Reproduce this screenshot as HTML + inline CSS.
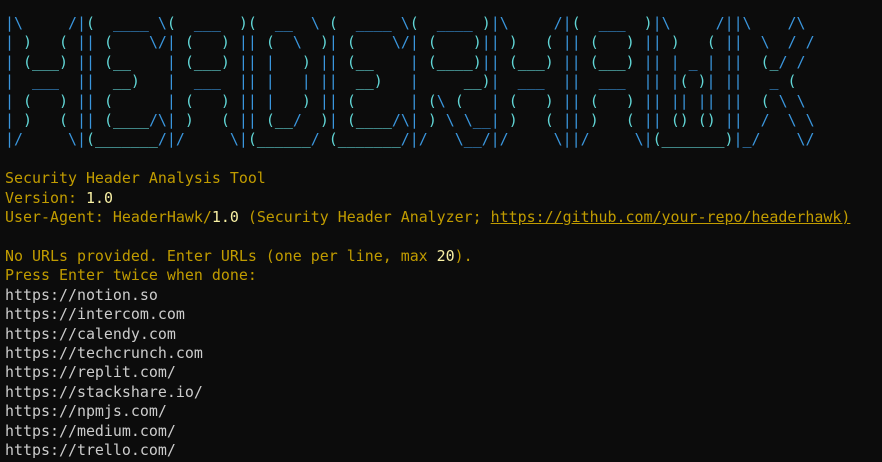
<!DOCTYPE html>
<html><head><meta charset="utf-8">
<style>
html,body{margin:0;padding:0;background:#0c0c0c;width:882px;height:462px;overflow:hidden}
pre{margin:0;position:absolute;left:5px;top:14px;font-family:"DejaVu Sans Mono","Liberation Mono",monospace;font-size:14.95px;line-height:19.4px;color:#cccccc;white-space:pre}
.a{color:#3a96dd}
.a i{font-style:normal;color:#61d6d6}
.y{color:#c19c00}
.b{color:#f9f1a5}
.u{text-decoration:underline}
</style></head><body>
<pre><span class="a">|\     /|<i>(</i>  ____ \<i>(</i>  ___  <i>)(</i>  __  \ <i>(</i>  ____ \<i>(</i>  ____ <i>)</i>|\     /|<i>(</i>  ___  <i>)</i>|\     /||\    /\
| <i>)</i>   <i>(</i> || <i>(</i>    \/| <i>(</i>   <i>)</i> || <i>(</i>  \  <i>)</i>| <i>(</i>    \/| <i>(</i>    <i>)</i>|| <i>)</i>   <i>(</i> || <i>(</i>   <i>)</i> || <i>)</i>   <i>(</i> ||  \  / /
| <i>(___)</i> || <i>(__</i>    | <i>(___)</i> || |   <i>)</i> || <i>(__</i>    | <i>(____)</i>|| <i>(___)</i> || <i>(___)</i> || | _ | ||  <i>(_</i>/ / 
|  ___  ||  <i>__)</i>   |  ___  || |   | ||  <i>__)</i>   |     <i>__)</i>|  ___  ||  ___  || |<i>( )</i>| ||   _ <i>(</i>  
| <i>(</i>   <i>)</i> || <i>(</i>      | <i>(</i>   <i>)</i> || |   <i>)</i> || <i>(</i>      | <i>(</i>\ <i>(</i>   | <i>(</i>   <i>)</i> || <i>(</i>   <i>)</i> || || || ||  <i>(</i> \ \ 
| <i>)</i>   <i>(</i> || <i>(____</i>/\| <i>)</i>   <i>(</i> || <i>(__</i>/  <i>)</i>| <i>(____</i>/\| <i>)</i> \ \__| <i>)</i>   <i>(</i> || <i>)</i>   <i>(</i> || <i>()</i> <i>()</i> ||  /  \ \
|/     \|<i>(_______</i>/|/     \|<i>(______</i>/ <i>(_______</i>/|/   \__/|/     \||/     \|<i>(_______)</i>|_/    \/</span>

<span class="y">Security Header Analysis Tool</span>
<span class="y">Version: </span><span class="b">1.0</span>
<span class="y">User-Agent: HeaderHawk/</span><span class="b">1.0</span><span class="y"> (Security Header Analyzer; <span class="u">https://github.com/your-repo/headerhawk)</span></span>

<span class="y">No URLs provided. Enter URLs (one per line, max </span><span class="b">20</span><span class="y">).</span>
<span class="y">Press Enter twice when done:</span>
https://notion.so
https://intercom.com
https://calendy.com
https://techcrunch.com
https://replit.com/
https://stackshare.io/
https://npmjs.com/
https://medium.com/
https://trello.com/</pre>
</body></html>
